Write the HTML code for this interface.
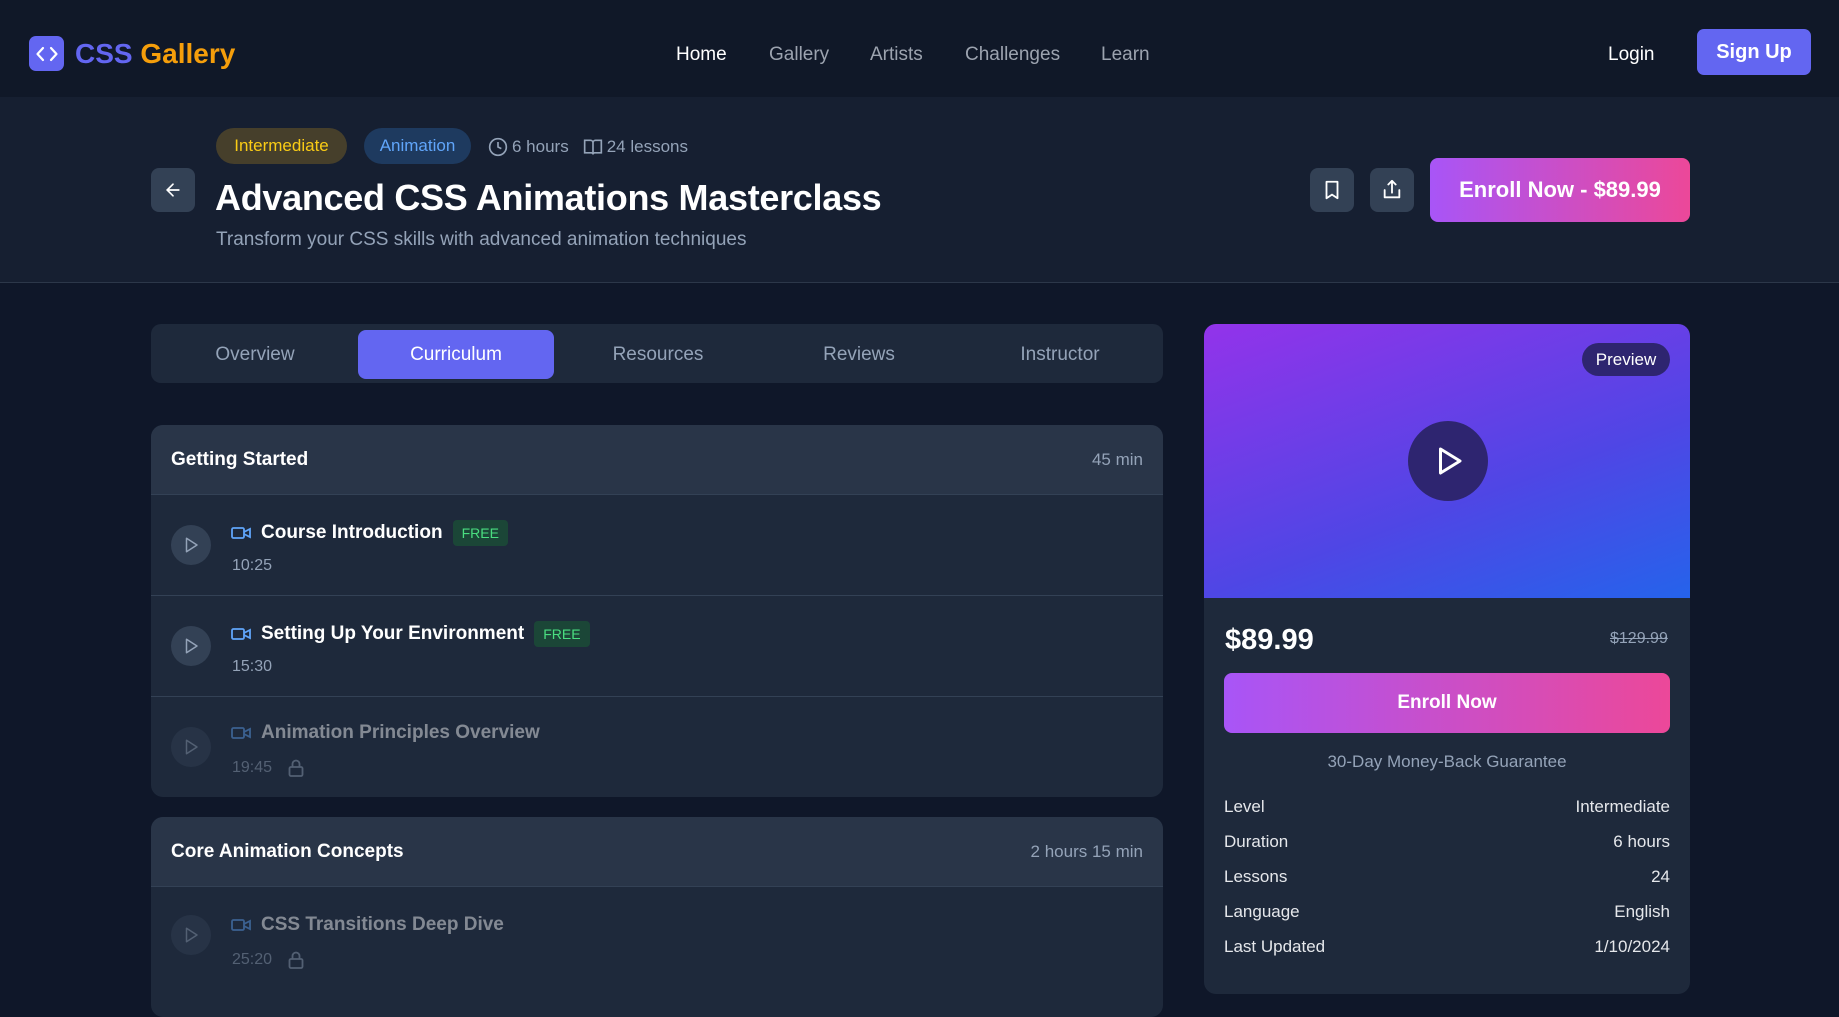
<!DOCTYPE html>
<html><head><meta charset="utf-8"><style>
*{box-sizing:border-box;margin:0;padding:0}
body{width:1839px;height:979px;overflow:hidden;background:#0f1729;font-family:"Liberation Sans",sans-serif;color:#fff;position:relative}
.a{position:absolute}
nav{position:absolute;left:0;top:0;width:1839px;height:97px;background:#101828}
.nl{position:absolute;top:44px;font-size:19px;color:#9ca3af}
.hdr{position:absolute;left:0;top:97px;width:1839px;height:186px;background:#161f31;border-bottom:1px solid #2c3749}
.badge{position:absolute;top:128px;height:36px;border-radius:18px;font-size:17px;line-height:36px;text-align:center}
.ib{position:absolute;width:44px;height:44px;background:#334155;border-radius:8px;display:flex;align-items:center;justify-content:center}
.grad{background:linear-gradient(90deg,#a855f7,#ec4899)}
.tabs{position:absolute;left:151px;top:324px;width:1012px;height:59px;background:#1e293b;border-radius:10px}
.tab{position:absolute;top:6px;width:196px;height:49px;line-height:49px;text-align:center;font-size:19px;color:#94a3b8;border-radius:8px}
.sec{position:absolute;left:151px;width:1012px;background:#1e293b;border-radius:12px;overflow:hidden}
.sh{height:70px;background:#293548;border-bottom:1px solid #334155;display:flex;justify-content:space-between;align-items:center;padding:0 20px;font-size:19px;font-weight:bold}
.sh span{font-weight:normal;font-size:17px;color:#94a3b8}
.row{position:relative;height:101px;border-bottom:1px solid #334155}
.row:last-child{border-bottom:none}
.pc{position:absolute;left:20px;top:30px;width:40px;height:40px;border-radius:50%;background:#334155;display:flex;align-items:center;justify-content:center}
.rt{position:absolute;left:80px;top:25px;display:flex;align-items:center;font-size:19px;font-weight:bold}
.rt svg{margin-right:10px}
.free{margin-left:10px;background:#1b4637;color:#4ade80;font-size:14px;font-weight:normal;padding:5px 9px;border-radius:4px}
.tm{position:absolute;left:81px;top:62px;font-size:16px;color:#94a3b8;display:flex;align-items:center}
.dim{opacity:.45}
.kv{position:absolute;left:1224px;width:446px;display:flex;justify-content:space-between;font-size:17px;color:#e5e7eb}
</style></head><body>
<nav>
 <div class="a" style="left:29px;top:36px;width:35px;height:35px;background:#6366f1;border-radius:7px;display:flex;align-items:center;justify-content:center">
  <svg width="22" height="16" viewBox="0 0 22 16" fill="none" stroke="#fff" stroke-width="2.2" stroke-linecap="round" stroke-linejoin="round"><path d="M7 2 1.5 8 7 14M15 2l5.5 6L15 14"/></svg></div>
 <div class="a" style="left:75px;top:38px;font-size:28px;font-weight:bold"><span style="color:#6366f1">CSS</span> <span style="color:#f59e0b">Gallery</span></div>
 <div class="nl" style="left:676px;color:#fff">Home</div>
 <div class="nl" style="left:769px">Gallery</div>
 <div class="nl" style="left:870px">Artists</div>
 <div class="nl" style="left:965px">Challenges</div>
 <div class="nl" style="left:1101px">Learn</div>
 <div class="nl" style="left:1608px;color:#fff">Login</div>
 <div class="a" style="left:1697px;top:29px;width:114px;height:46px;background:#6366f1;border-radius:7px;font-size:20px;font-weight:bold;line-height:46px;text-align:center">Sign Up</div>
</nav>
<div class="hdr"></div>
<div class="badge" style="left:216px;width:131px;background:#463f2b;color:#facc15">Intermediate</div>
<div class="badge" style="left:364px;width:107px;background:#1e3a5f;color:#60a5fa">Animation</div>
<div class="a" style="left:488px;top:137px;font-size:17px;color:#94a3b8;display:flex;align-items:center">
 <svg width="20" height="20" viewBox="0 0 24 24" fill="none" stroke="#94a3b8" stroke-width="2"><circle cx="12" cy="12" r="10"/><path d="M12 6v6l4 2"/></svg><span style="margin-left:4px">6 hours</span>
 <svg style="margin-left:14px" width="20" height="20" viewBox="0 0 24 24" fill="none" stroke="#94a3b8" stroke-width="2"><path d="M2 4h7a3 3 0 0 1 3 3v14a2 2 0 0 0-2-2H2zM22 4h-7a3 3 0 0 0-3 3v14a2 2 0 0 1 2-2h8z"/></svg><span style="margin-left:4px">24 lessons</span></div>
<div class="ib" style="left:151px;top:168px"><svg width="20" height="20" viewBox="0 0 24 24" fill="none" stroke="#fff" stroke-width="2" stroke-linecap="round"><path d="M19 12H5M12 19l-7-7 7-7"/></svg></div>
<div class="a" style="left:215px;top:177px;font-size:36px;font-weight:bold;letter-spacing:-0.3px">Advanced CSS Animations Masterclass</div>
<div class="a" style="left:216px;top:229px;font-size:19px;color:#94a3b8">Transform your CSS skills with advanced animation techniques</div>
<div class="ib" style="left:1310px;top:168px"><svg width="22" height="22" viewBox="0 0 24 24" fill="none" stroke="#fff" stroke-width="2" stroke-linejoin="round"><path d="M6 3h12v18l-6-4-6 4z"/></svg></div>
<div class="ib" style="left:1370px;top:168px"><svg width="22" height="22" viewBox="0 0 24 24" fill="none" stroke="#fff" stroke-width="2" stroke-linecap="round" stroke-linejoin="round"><path d="M4 12v8h16v-8M16 6l-4-4-4 4M12 2v13"/></svg></div>
<div class="a grad" style="left:1430px;top:158px;width:260px;height:64px;border-radius:8px;font-size:22px;font-weight:bold;line-height:64px;text-align:center">Enroll Now - $89.99</div>

<div class="tabs">
 <div class="tab" style="left:6px">Overview</div>
 <div class="tab" style="left:207px;background:#6366f1;color:#fff">Curriculum</div>
 <div class="tab" style="left:409px">Resources</div>
 <div class="tab" style="left:610px">Reviews</div>
 <div class="tab" style="left:811px">Instructor</div>
</div>

<div class="sec" style="top:425px;height:372px">
 <div class="sh">Getting Started<span>45 min</span></div>
 <div class="row"><div class="pc"><svg width="18" height="18" viewBox="0 0 24 24" fill="none" stroke="#94a3b8" stroke-width="2" stroke-linejoin="round"><path d="M6 3l14 9-14 9z"/></svg></div>
  <div class="rt"><svg width="20" height="14" viewBox="0 0 20 14" fill="none" stroke="#60a5fa" stroke-width="1.8"><rect x="1" y="2" width="12" height="10" rx="1.5"/><path d="M13 6l6-3v8l-6-3"/></svg>Course Introduction<span class="free">FREE</span></div>
  <div class="tm">10:25</div></div>
 <div class="row"><div class="pc"><svg width="18" height="18" viewBox="0 0 24 24" fill="none" stroke="#94a3b8" stroke-width="2" stroke-linejoin="round"><path d="M6 3l14 9-14 9z"/></svg></div>
  <div class="rt"><svg width="20" height="14" viewBox="0 0 20 14" fill="none" stroke="#60a5fa" stroke-width="1.8"><rect x="1" y="2" width="12" height="10" rx="1.5"/><path d="M13 6l6-3v8l-6-3"/></svg>Setting Up Your Environment<span class="free">FREE</span></div>
  <div class="tm">15:30</div></div>
 <div class="row dim"><div class="pc"><svg width="18" height="18" viewBox="0 0 24 24" fill="none" stroke="#94a3b8" stroke-width="2" stroke-linejoin="round"><path d="M6 3l14 9-14 9z"/></svg></div>
  <div class="rt"><svg width="20" height="14" viewBox="0 0 20 14" fill="none" stroke="#60a5fa" stroke-width="1.8"><rect x="1" y="2" width="12" height="10" rx="1.5"/><path d="M13 6l6-3v8l-6-3"/></svg>Animation Principles Overview</div>
  <div class="tm">19:45<svg style="margin-left:16px" width="16" height="18" viewBox="0 0 16 18" fill="none" stroke="#94a3b8" stroke-width="1.8"><rect x="1.5" y="8" width="13" height="9" rx="1.5"/><path d="M4.5 8V5a3.5 3.5 0 0 1 7 0v3"/></svg></div></div>
</div>

<div class="sec" style="top:817px;height:200px">
 <div class="sh">Core Animation Concepts<span>2 hours 15 min</span></div>
 <div class="row dim" style="height:100px"><div class="pc" style="top:28px"><svg width="18" height="18" viewBox="0 0 24 24" fill="none" stroke="#94a3b8" stroke-width="2" stroke-linejoin="round"><path d="M6 3l14 9-14 9z"/></svg></div>
  <div class="rt" style="top:27px"><svg width="20" height="14" viewBox="0 0 20 14" fill="none" stroke="#60a5fa" stroke-width="1.8"><rect x="1" y="2" width="12" height="10" rx="1.5"/><path d="M13 6l6-3v8l-6-3"/></svg>CSS Transitions Deep Dive</div>
  <div class="tm" style="top:64px">25:20<svg style="margin-left:16px" width="16" height="18" viewBox="0 0 16 18" fill="none" stroke="#94a3b8" stroke-width="1.8"><rect x="1.5" y="8" width="13" height="9" rx="1.5"/><path d="M4.5 8V5a3.5 3.5 0 0 1 7 0v3"/></svg></div></div>
</div>

<div class="a" style="left:1204px;top:324px;width:486px;height:670px;background:#1e293b;border-radius:12px;overflow:hidden">
 <div style="height:274px;background:linear-gradient(160deg,#9333ea,#4f46e5 60%,#2563eb)"></div>
</div>
<div class="a" style="left:1582px;top:343px;width:88px;height:33px;border-radius:17px;background:#2e2570;font-size:17px;line-height:33px;text-align:center">Preview</div>
<div class="a" style="left:1408px;top:421px;width:80px;height:80px;border-radius:50%;background:#2e2570;display:flex;align-items:center;justify-content:center"><svg width="36" height="36" viewBox="0 0 24 24" fill="none" stroke="#fff" stroke-width="2" stroke-linejoin="round"><path d="M7 4l13 8-13 8z"/></svg></div>
<div class="a" style="left:1225px;top:624px;font-size:29px;font-weight:bold">$89.99</div>
<div class="a" style="left:1610px;top:630px;font-size:16px;color:#94a3b8;text-decoration:line-through">$129.99</div>
<div class="a grad" style="left:1224px;top:673px;width:446px;height:60px;border-radius:8px;font-size:19px;font-weight:bold;line-height:60px;text-align:center">Enroll Now</div>
<div class="a" style="left:1224px;top:752px;width:446px;text-align:center;font-size:17px;color:#94a3b8">30-Day Money-Back Guarantee</div>
<div class="kv" style="top:797px"><span>Level</span><span>Intermediate</span></div>
<div class="kv" style="top:832px"><span>Duration</span><span>6 hours</span></div>
<div class="kv" style="top:867px"><span>Lessons</span><span>24</span></div>
<div class="kv" style="top:902px"><span>Language</span><span>English</span></div>
<div class="kv" style="top:937px"><span>Last Updated</span><span>1/10/2024</span></div>
</body></html>
